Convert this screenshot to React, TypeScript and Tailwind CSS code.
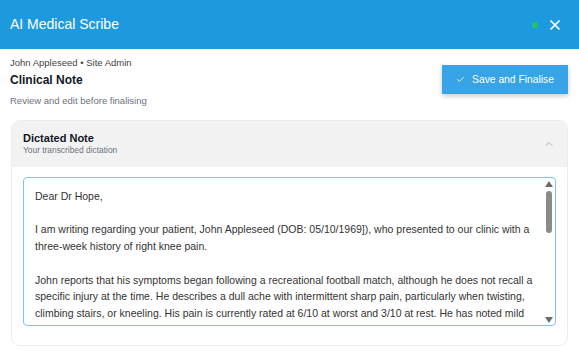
import { Check, ChevronUp, X } from "lucide-react";

const NOTE = `Dear Dr Hope,

I am writing regarding your patient, John Appleseed (DOB: 05/10/1969]), who presented to our clinic with a three-week history of right knee pain.

John reports that his symptoms began following a recreational football match, although he does not recall a specific injury at the time. He describes a dull ache with intermittent sharp pain, particularly when twisting, climbing stairs, or kneeling. His pain is currently rated at 6/10 at worst and 3/10 at rest. He has noted mild swelling and occasional stiffness in the mornings, without any episodes of true locking or giving way.

On examination, there was a small effusion of the right knee with tenderness along the medial joint line.`;

function FakeScrollbar() {
	return (
		<div className="pointer-events-none absolute bottom-[3px] right-[3px] top-[4px] flex w-[8px] flex-col items-center">
			<div className="h-0 w-0 border-x-[4px] border-b-[6px] border-x-transparent border-b-[#6b6b6b]" />
			<div className="mt-[4px] h-[42px] w-[6px] rounded-full bg-[#8a8a8a]" />
			<div className="flex-1" />
			<div className="h-0 w-0 border-x-[4px] border-t-[6px] border-x-transparent border-t-[#6b6b6b]" />
		</div>
	);
}

export default function App() {
	return (
		<div className="min-h-screen bg-white font-['Liberation_Sans',Arial,sans-serif] text-gray-900">
			{/* Header */}
			<div className="flex h-[49px] items-center justify-between bg-[#1d9ade] pl-[10px] pr-[16px]">
				<h1 className="text-[14px] text-white">AI Medical Scribe</h1>
				<div className="flex items-center gap-[9px]">
					<span className="h-[6px] w-[6px] rounded-full bg-[#22c55e]" />
					<X className="h-[16px] w-[16px] text-white" strokeWidth={2.6} />
				</div>
			</div>

			{/* Title row */}
			<div className="flex items-start justify-between pl-[10px] pr-[11px] pt-[8px]">
				<div>
					<p className="text-[9.5px] leading-[12px] text-[#444]">
						John Appleseed • Site Admin
					</p>
					<h2 className="mt-[3px] text-[12px] font-bold leading-[16px] text-[#111827]">
						Clinical Note
					</h2>
					<p className="mt-[7px] text-[9.5px] leading-[12px] text-[#6b7280]">
						Review and edit before finalising
					</p>
				</div>
				<button className="mt-[8px] flex h-[29px] w-[126px] items-center justify-center gap-[7px] bg-[#38a3e7] text-[10.3px] text-white shadow-[0_2px_5px_rgba(0,0,0,0.22)]">
					<Check className="h-[9px] w-[9px]" strokeWidth={2.2} />
					Save and Finalise
				</button>
			</div>

			{/* Dictated note card */}
			<div className="ml-[11px] mr-[11px] mt-[13px] overflow-hidden rounded-[9px] border border-[#ececec]">
				<div className="flex h-[46px] items-center justify-between bg-[#f2f2f2] pl-[11px] pr-[12px]">
					<div>
						<p className="text-[11px] font-bold leading-[13px] text-[#111827]">
							Dictated Note
						</p>
						<p className="text-[8.4px] leading-[11px] text-[#6b7280]">
							Your transcribed dictation
						</p>
					</div>
					<ChevronUp className="h-[12px] w-[12px] text-[#a3a3a3]" strokeWidth={1.6} />
				</div>
				<div className="px-[11px] pb-[19px] pt-[10px]">
					<div className="relative">
						<textarea
							className="block h-[149px] w-full resize-none overflow-hidden rounded-[4px] border border-[#80c1ee] pl-[11px] pr-[15px] pt-[10px] text-[10.5px] leading-[16.7px] text-[#333] outline-none"
							defaultValue={NOTE}
						/>
						<FakeScrollbar />
					</div>
				</div>
			</div>
		</div>
	);
}
